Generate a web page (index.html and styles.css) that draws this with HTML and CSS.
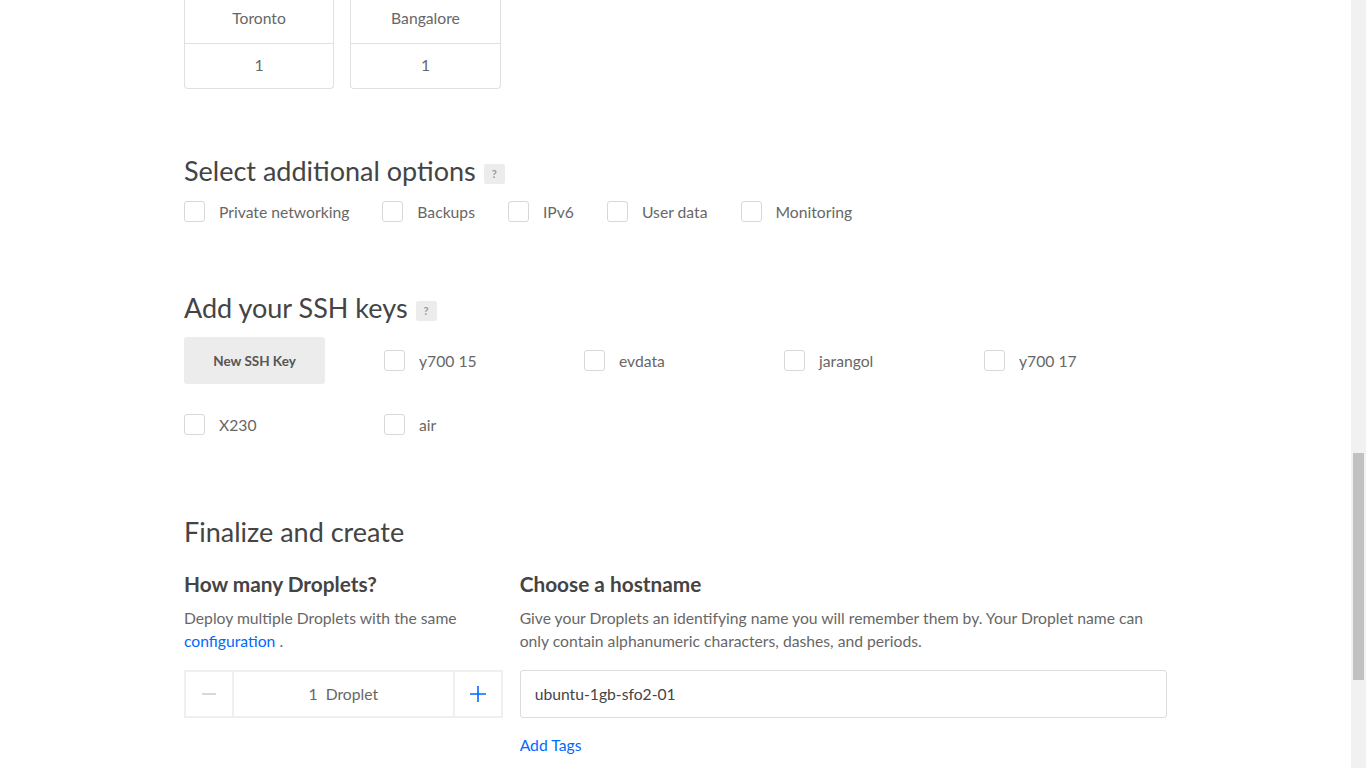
FILE: index.html
```html
<!DOCTYPE html>
<html>
<head>
<meta charset="utf-8">
<link rel="stylesheet" href="styles.css">
</head>
<body>
<div class="viewport">
  <main class="page">
    <section class="regions">
      <div class="region-card">
        <div class="region-name">Toronto</div>
        <div class="region-count">1</div>
      </div>
      <div class="region-card">
        <div class="region-name">Bangalore</div>
        <div class="region-count">1</div>
      </div>
    </section>

    <section class="block options">
      <h2 class="heading">Select additional options <span class="help">?</span></h2>
      <div class="option-row">
        <label class="check"><span class="box"></span><span>Private networking</span></label>
        <label class="check"><span class="box"></span><span>Backups</span></label>
        <label class="check"><span class="box"></span><span>IPv6</span></label>
        <label class="check"><span class="box"></span><span>User data</span></label>
        <label class="check"><span class="box"></span><span>Monitoring</span></label>
      </div>
    </section>

    <section class="block ssh">
      <h2 class="heading">Add your SSH keys <span class="help">?</span></h2>
      <div class="ssh-grid">
        <div class="ssh-cell"><button class="new-key">New SSH Key</button></div>
        <label class="ssh-cell check"><span class="box"></span><span>y700 15</span></label>
        <label class="ssh-cell check"><span class="box"></span><span>evdata</span></label>
        <label class="ssh-cell check"><span class="box"></span><span>jarangol</span></label>
        <label class="ssh-cell check"><span class="box"></span><span>y700 17</span></label>
        <label class="ssh-cell check"><span class="box"></span><span>X230</span></label>
        <label class="ssh-cell check"><span class="box"></span><span>air</span></label>
      </div>
    </section>

    <section class="block finalize">
      <h2 class="heading">Finalize and create</h2>
      <div class="final-cols">
        <div class="col-left">
          <h3 class="subheading">How many Droplets?</h3>
          <p class="desc">Deploy multiple Droplets with the same <a class="link" href="#">configuration</a> .</p>
          <div class="stepper">
            <span class="step minus">
              <svg width="16" height="16" viewBox="0 0 16 16"><path d="M1 8h14" stroke="#cfcfcf" stroke-width="1.6"/></svg>
            </span>
            <span class="step-value">1&nbsp; Droplet</span>
            <span class="step plus">
              <svg width="18" height="18" viewBox="0 0 18 18"><path d="M1 9h16M9 1v16" stroke="#0069ff" stroke-width="1.6"/></svg>
            </span>
          </div>
        </div>
        <div class="col-right">
          <h3 class="subheading">Choose a hostname</h3>
          <p class="desc">Give your Droplets an identifying name you will remember them by. Your Droplet name can only contain alphanumeric characters, dashes, and periods.</p>
          <div class="host-input">ubuntu-1gb-sfo2-01</div>
          <a class="link add-tags" href="#">Add Tags</a>
        </div>
      </div>
    </section>
  </main>
  <div class="scrollbar"><div class="thumb"></div></div>
</div>
</body>
</html>
```

FILE: styles.css
```css
* { box-sizing: border-box; }
html, body {
  margin: 0;
  padding: 0;
  height: 100%;
  overflow: hidden;
  background: #fff;
}
body {
  font-family: Lato, "Open Sans", sans-serif;
  color: #676767;
}
.viewport {
  position: relative;
  height: 768px;
  padding-right: 15px;
  overflow: hidden;
}
.page {
  width: 983px;
  margin: 0 auto;
}
.regions {
  display: flex;
  gap: 16px;
  margin-top: -8px;
}
.region-card {
  width: 150px;
  border: 1px solid #e0e0e0;
  border-top: none;
  border-radius: 0 0 4px 4px;
  font-size: 15.7px;
  color: #676767;
  text-align: center;
}
.region-card + .region-card { width: 151px; }
.region-name {
  height: 52px;
  line-height: 52px;
  border-bottom: 1px solid #e0e0e0;
}
.region-count {
  height: 44px;
  line-height: 43px;
}
.options { margin-top: 66px; }
.heading {
  margin: 0;
  font-weight: 400;
  font-size: 27px;
  line-height: 32px;
  color: #444;
  display: flex;
  align-items: center;
}
.help {
  display: inline-flex;
  align-items: center;
  justify-content: center;
  width: 21px;
  height: 20px;
  margin-left: 8px;
  margin-top: 6px;
  background: #ececec;
  border-radius: 2px;
  font-size: 11px;
  font-weight: 700;
  color: #999;
}
.option-row {
  display: flex;
  gap: 33px;
  margin-top: 14px;
}
.check {
  display: flex;
  align-items: center;
  gap: 14px;
  font-size: 15.7px;
  color: #676767;
}
.box {
  width: 21px;
  height: 21px;
  border: 1px solid #d8d8d8;
  border-radius: 3px;
  flex: none;
  background: #fff;
}
.ssh { margin-top: 70px; }
.ssh-grid {
  display: grid;
  grid-template-columns: repeat(5, 200px);
  grid-auto-rows: 47px;
  row-gap: 17px;
  margin-top: 13px;
}
.new-key {
  width: 141px;
  height: 47px;
  border: none;
  border-radius: 3px;
  background: #ececec;
  font-family: inherit;
  font-size: 13.5px;
  font-weight: 700;
  color: #555;
}
.finalize { margin-top: 68px; }
.final-cols {
  display: flex;
  gap: 17px;
  margin-top: 24px;
}
.col-left { width: 319px; }
.col-right { width: 648px; }
.subheading {
  margin: 0;
  font-size: 20.8px;
  font-weight: 700;
  line-height: 24px;
  color: #444;
}
.desc {
  margin: 11px 0 17px;
  font-size: 15.7px;
  line-height: 23px;
  color: #676767;
}
.link {
  color: #0069ff;
  text-decoration: none;
}
.stepper {
  display: flex;
  height: 48px;
  border: 2px solid #efefef;
}
.step {
  width: 48px;
  display: flex;
  align-items: center;
  justify-content: center;
}
.minus { border-right: 2px solid #efefef; }
.plus { border-left: 2px solid #efefef; }
.step-value {
  flex: 1;
  display: flex;
  align-items: center;
  justify-content: center;
  font-size: 15.7px;
  color: #676767;
}
.host-input {
  height: 48px;
  border: 1px solid #dcdcdc;
  border-radius: 3px;
  padding: 0 14px;
  display: flex;
  align-items: center;
  font-size: 15.7px;
  color: #444;
}
.add-tags {
  display: inline-block;
  margin-top: 18px;
  font-size: 15.7px;
}
.scrollbar {
  position: absolute;
  top: 0;
  right: 0;
  width: 15px;
  height: 768px;
  background: #f1f1f1;
}
.thumb {
  position: absolute;
  top: 453px;
  left: 2px;
  width: 11px;
  height: 227px;
  background: #c1c1c1;
}
```
